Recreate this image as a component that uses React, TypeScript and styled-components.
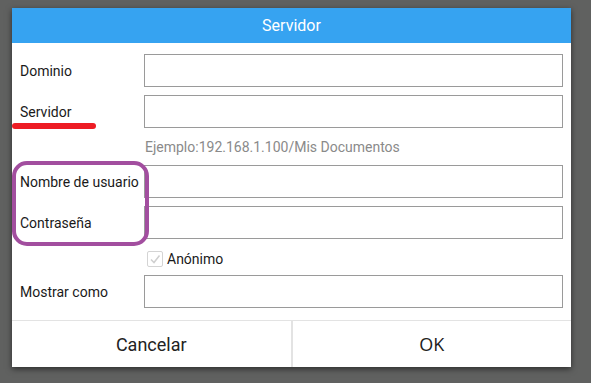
import React from 'react';
import styled, { createGlobalStyle } from 'styled-components';

const GlobalStyle = createGlobalStyle`
  html, body {
    margin: 0;
    padding: 0;
    background: #606160;
    font-family: Roboto, "Noto Sans", sans-serif;
  }
`;

const Screen = styled.div`
  position: relative;
  width: 591px;
  height: 383px;
  padding: 8px 0 0 12px;
  box-sizing: border-box;
  overflow: hidden;
`;

const Dialog = styled.div`
  width: 559px;
  background: #fff;
  box-shadow: 0 2px 6px rgba(0, 0, 0, 0.55);
  display: flex;
  flex-direction: column;
`;

const Header = styled.div`
  height: 35px;
  background: #36a3f1;
  color: #fff;
  font-size: 16px;
  display: flex;
  align-items: center;
  justify-content: center;
`;

const Form = styled.div`
  display: grid;
  grid-template-columns: 124px 1fr;
  row-gap: 8px;
  padding: 11px 8px 12px 8px;
`;

const Label = styled.div`
  display: flex;
  align-items: center;
  font-size: 14px;
  color: #1a1a1a;
  white-space: nowrap;
`;

const Field = styled.input`
  height: 33px;
  box-sizing: border-box;
  border: 1px solid #9a9a9a;
  border-radius: 0;
  outline: none;
  background: #fff;
  margin: 0;
  padding: 0 6px;
`;

const Hint = styled.div`
  grid-column: 2;
  height: 21px;
  display: flex;
  align-items: center;
  padding-left: 1px;
  font-size: 14px;
  color: #8a8a8a;
`;

const CheckRow = styled.label`
  grid-column: 2;
  height: 20px;
  box-sizing: border-box;
  display: flex;
  align-items: center;
  gap: 4px;
  padding: 4px 0 0 3px;
  font-size: 14px;
  color: #1a1a1a;
`;

const Box = styled.span`
  width: 14px;
  height: 14px;
  border: 1px solid #d4d4d4;
  border-radius: 2px;
  display: flex;
  align-items: center;
  justify-content: center;
`;

const Footer = styled.div`
  display: flex;
  height: 46px;
  border-top: 1px solid #e3e3e3;
`;

const FooterButton = styled.button<{ $divider?: boolean }>`
  flex: 1;
  border: none;
  background: #fff;
  margin: 0;
  padding: 0;
  font-family: ${p => (p.$divider ? 'Roboto' : '"Open Sans"')}, sans-serif;
  font-size: 18px;
  color: #222;
  border-right: ${p => (p.$divider ? '2px solid #e3e3e3' : 'none')};
`;

const Underline = styled.div`
  position: absolute;
  left: 12px;
  top: 123px;
  width: 84px;
  height: 6px;
  border-radius: 3px;
  background: #ed1c24;
`;

const Highlight = styled.div`
  position: absolute;
  left: 12px;
  top: 161px;
  width: 137px;
  height: 85px;
  box-sizing: border-box;
  border: 4px solid #a24e9f;
  border-radius: 15px;
`;

const rows: [string, string][] = [
  ['Dominio', 'domain'],
  ['Servidor', 'server'],
];

export default function App() {
  return (
    <>
      <GlobalStyle />
      <Screen>
        <Dialog>
          <Header>Servidor</Header>
          <Form>
            {rows.map(([label, key]) => (
              <React.Fragment key={key}>
                <Label>{label}</Label>
                <Field />
              </React.Fragment>
            ))}
            <Hint>Ejemplo:192.168.1.100/Mis Documentos</Hint>
            <Label>Nombre de usuario</Label>
            <Field />
            <Label>Contraseña</Label>
            <Field type="password" />
            <CheckRow>
              <Box>
                <svg width="12" height="12" viewBox="0 0 12 12">
                  <path d="M2 6.5 L5 9.5 L10.5 2.5" fill="none" stroke="#cfcfcf" strokeWidth="1.5" />
                </svg>
              </Box>
              Anónimo
            </CheckRow>
            <Label>Mostrar como</Label>
            <Field />
          </Form>
          <Footer>
            <FooterButton $divider>Cancelar</FooterButton>
            <FooterButton>OK</FooterButton>
          </Footer>
        </Dialog>
        <Underline />
        <Highlight />
      </Screen>
    </>
  );
}
